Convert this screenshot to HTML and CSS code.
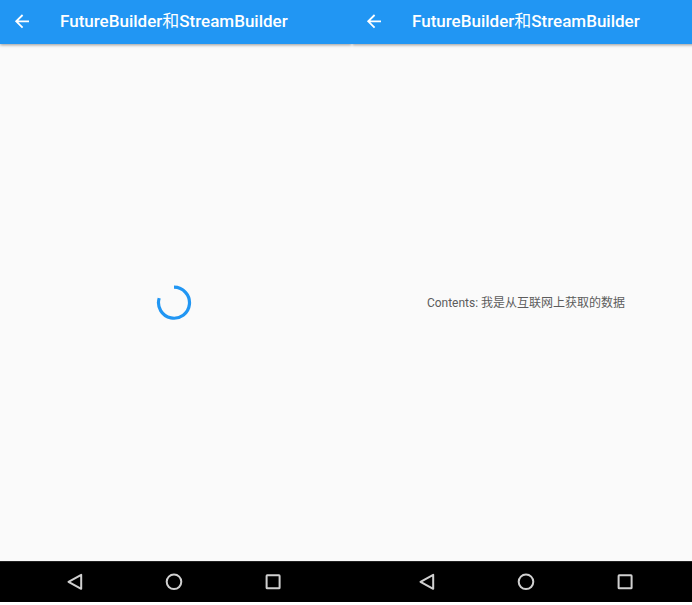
FILE: index.html
```html
<!DOCTYPE html>
<html lang="zh-CN">
<head>
<meta charset="utf-8">
<meta name="viewport" content="width=device-width, initial-scale=1">
<title>FutureBuilder和StreamBuilder</title>
<link rel="stylesheet" href="styles.css">
</head>
<body>
<div class="screens">
  <section class="screen">
    <header class="app-bar">
      <button class="back" aria-label="Back"><svg width="20" height="20" viewBox="0 0 20 20"><path d="M17 10.3H4.4M10.6 4L4.2 10.3l6.4 6.3"/></svg></button>
      <h1 class="title">FutureBuilder<span class="title-han">和</span>StreamBuilder</h1>
    </header>
    <main class="content">
      <svg class="spinner" width="36" height="36" viewBox="0 0 36 36" role="img" aria-label="Loading"><path d="M18 2.2A15.5 15.5 0 1 1 3.2 13.1"/></svg>
    </main>
    <nav class="nav-bar">
      <button class="nav-button" aria-label="Back"><svg width="20" height="20" viewBox="0 0 20 20"><path d="M16.2 2.8v14L3.5 9.8z"/></svg></button>
      <button class="nav-button" aria-label="Home"><svg width="20" height="20" viewBox="0 0 20 20"><circle cx="10" cy="9.8" r="7.3"/></svg></button>
      <button class="nav-button" aria-label="Recent apps"><svg width="20" height="20" viewBox="0 0 20 20"><rect x="3.6" y="3.3" width="13" height="13" rx=".6"/></svg></button>
    </nav>
  </section>
  <section class="screen">
    <header class="app-bar">
      <button class="back" aria-label="Back"><svg width="20" height="20" viewBox="0 0 20 20"><path d="M17 10.3H4.4M10.6 4L4.2 10.3l6.4 6.3"/></svg></button>
      <h1 class="title">FutureBuilder<span class="title-han">和</span>StreamBuilder</h1>
    </header>
    <main class="content">
      <p class="message">Contents: 我是从互联网上获取的数据</p>
    </main>
    <nav class="nav-bar">
      <button class="nav-button" aria-label="Back"><svg width="20" height="20" viewBox="0 0 20 20"><path d="M16.2 2.8v14L3.5 9.8z"/></svg></button>
      <button class="nav-button" aria-label="Home"><svg width="20" height="20" viewBox="0 0 20 20"><circle cx="10" cy="9.8" r="7.3"/></svg></button>
      <button class="nav-button" aria-label="Recent apps"><svg width="20" height="20" viewBox="0 0 20 20"><rect x="3.6" y="3.3" width="13" height="13" rx=".6"/></svg></button>
    </nav>
  </section>
</div>
</body>
</html>
```
FILE: styles.css
```css
* {
  box-sizing: border-box;
}

body {
  margin: 0;
  background: #fff;
  font-family: Roboto, "Noto Sans CJK SC", sans-serif;
}

button {
  display: flex;
  align-items: center;
  justify-content: center;
  padding: 0;
  border: 0;
  background: none;
}

svg {
  display: block;
  fill: none;
}

.screens {
  display: flex;
  height: calc(100vh - 3px);
  overflow: hidden;
}

/* The second screen runs past the right edge of the window. */
.screen {
  display: flex;
  flex: 0 0 calc(50% + 6px);
  flex-direction: column;
  background: #fafafa;
}

/* The clip keeps the shadow below the bar and off the neighbouring screen. */
.app-bar {
  display: flex;
  align-items: center;
  height: 44px;
  padding: 0 12px 2px;
  background: #2196f3;
  box-shadow: 0 1px 3px rgba(0, 0, 0, 0.4);
  clip-path: inset(0 0 -6px 0);
}

.back {
  width: 20px;
  height: 20px;
  margin-right: 28px;
  stroke: #fff;
  stroke-width: 1.8;
}

.title {
  margin: 0;
  color: #fff;
  font-size: 17px;
  font-weight: 500;
  line-height: 24px;
  white-space: nowrap;
}

.title-han {
  font-weight: 400;
}

.content {
  display: flex;
  flex: 1;
  align-items: center;
  justify-content: center;
  padding-right: 4px;
}

.spinner {
  stroke: #2196f3;
  stroke-width: 3.2;
}

.message {
  margin: 0;
  color: #5c5c5c;
  font-size: 12px;
  line-height: 16px;
}

.nav-bar {
  display: flex;
  align-items: center;
  justify-content: center;
  gap: 79px;
  height: 41px;
  padding-right: 4px;
  border-top: 1px solid #222;
  background: #000;
}

.nav-button {
  width: 20px;
  height: 20px;
  stroke: #d0d0d0;
  stroke-width: 2;
  stroke-linejoin: round;
}
```
